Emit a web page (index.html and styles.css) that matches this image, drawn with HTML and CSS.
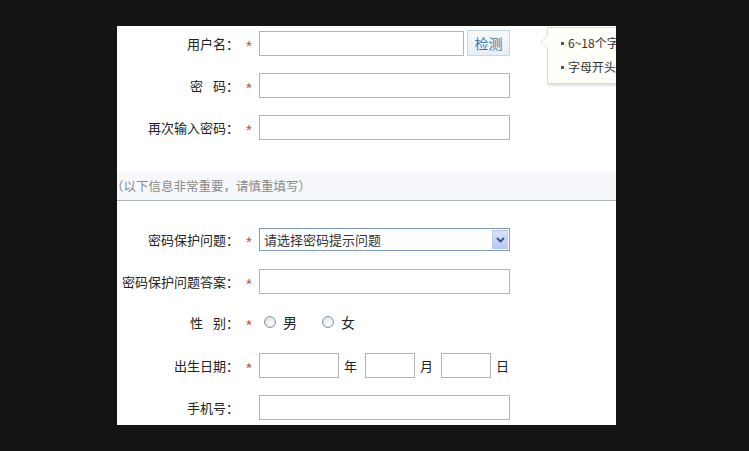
FILE: index.html
```html
<!DOCTYPE html>
<html lang="zh-CN">
<head>
<meta charset="utf-8">
<title>注册</title>
<link rel="stylesheet" href="styles.css">
</head>
<body>
<div class="page">
  <div class="panel">
    <div class="group first">
      <div class="row">
        <label class="lbl">用户名：</label><span class="req">*</span>
        <div class="field">
          <input class="inp user" type="text">
          <button class="check" type="button">检测</button>
        </div>
      </div>
      <div class="row">
        <label class="lbl">密<span class="sp"></span>码：</label><span class="req">*</span>
        <div class="field"><input class="inp" type="password"></div>
      </div>
      <div class="row">
        <label class="lbl">再次输入密码：</label><span class="req">*</span>
        <div class="field"><input class="inp" type="password"></div>
      </div>
    </div>

    <div class="notice"><span>（以下信息非常重要，请慎重填写）</span></div>

    <div class="group second">
      <div class="row top">
        <label class="lbl">密码保护问题：</label><span class="req">*</span>
        <div class="field">
          <div class="select">
            <span class="sel-text">请选择密码提示问题</span>
            <span class="sel-btn">
              <svg width="9" height="6" viewBox="0 0 9 6"><path d="M1 1 L4.5 4.5 L8 1" fill="none" stroke="#3b4f7a" stroke-width="1.8"/></svg>
            </span>
          </div>
        </div>
      </div>
      <div class="row">
        <label class="lbl">密码保护问题答案：</label><span class="req">*</span>
        <div class="field"><input class="inp" type="text"></div>
      </div>
      <div class="row gender-row">
        <label class="lbl">性<span class="sp"></span>别：</label><span class="req">*</span>
        <div class="field gender">
          <span class="radio"></span><span class="opt">男</span>
          <span class="radio second-radio"></span><span class="opt">女</span>
        </div>
      </div>
      <div class="row">
        <label class="lbl">出生日期：</label><span class="req">*</span>
        <div class="field date">
          <input class="inp year" type="text"><span class="unit">年</span>
          <input class="inp md" type="text"><span class="unit">月</span>
          <input class="inp md" type="text"><span class="unit">日</span>
        </div>
      </div>
      <div class="row">
        <label class="lbl">手机号：</label><span class="req"></span>
        <div class="field"><input class="inp" type="text"></div>
      </div>
    </div>

    <div class="tip">
      <span class="tip-arrow"></span>
      <ul>
        <li>6~18个字符，可使用字母、数字</li>
        <li>字母开头</li>
      </ul>
    </div>
  </div>
</div>
</body>
</html>
```
FILE: styles.css
```css
html, body {
  margin: 0;
  padding: 0;
  background: #141414;
}
body {
  font-family: "Noto Sans CJK SC", "Liberation Sans", sans-serif;
  color: #222;
}
.page {
  padding: 26px 0 0 117px;
}
.panel {
  position: relative;
  width: 499px;
  height: 399px;
  background: #fff;
  overflow: hidden;
}
.group {
  display: flex;
  flex-direction: column;
  gap: 17px;
}
.group.first {
  padding-top: 5px;
}
.group.second {
  margin-top: 26px;
}
.row {
  display: grid;
  grid-template-columns: 122px 20px auto;
  grid-template-rows: 25px;
  align-items: center;
  height: 25px;
}
.lbl {
  text-align: right;
  font-size: 13px;
  line-height: 25px;
  white-space: nowrap;
  color: #222;
}
.sp {
  display: inline-block;
  width: 10px;
}
.req {
  font-family: "Liberation Sans", sans-serif;
  color: #c2413a;
  font-size: 15px;
  height: 25px;
  line-height: 30px;
  text-align: center;
}
.field {
  display: flex;
  align-items: center;
  height: 25px;
}
.inp {
  box-sizing: border-box;
  width: 251px;
  height: 25px;
  border: 1px solid #b4b4b4;
  margin: 0;
  padding: 0 4px;
  background: #fff;
  outline: none;
}
.inp.user {
  width: 205px;
}
.check {
  box-sizing: border-box;
  margin-left: 3px;
  width: 43px;
  height: 26px;
  margin-top: -1px;
  border: 1px solid #c9d7e2;
  background: linear-gradient(#f7fafd, #e6eff5);
  color: #3b7aa8;
  font-family: "Noto Sans CJK SC", sans-serif;
  font-size: 14px;
  padding: 0;
  line-height: 24px;
}
.notice {
  margin-top: 32px;
  height: 28px;
  line-height: 28px;
  background: #f6f8fb;
  border-bottom: 1px solid #a9b5c2;
  font-size: 12.5px;
  color: #8a8a8a;
  white-space: nowrap;
}
.notice span {
  display: inline-block;
  margin-left: -6px;
}
.row.top {
  align-items: start;
}
.select {
  box-sizing: border-box;
  width: 251px;
  height: 23px;
  border: 1px solid #7f9db9;
  display: flex;
  align-items: center;
  justify-content: space-between;
  padding: 0 1px 0 4px;
}
.sel-text {
  font-size: 13px;
  color: #333;
  line-height: 21px;
}
.sel-btn {
  box-sizing: border-box;
  width: 16px;
  height: 19px;
  border: 1px solid #b9c9ef;
  background: linear-gradient(#d6e2fc, #b6c8f6);
  display: flex;
  align-items: center;
  justify-content: center;
}
.gender-row .lbl,
.gender-row .req {
  margin-top: -2px;
}
.gender {
  padding-left: 5px;
  margin-top: -3px;
}
.radio {
  box-sizing: border-box;
  width: 12px;
  height: 12px;
  border-radius: 50%;
  border: 1px solid #8595a8;
  background: radial-gradient(circle at 60% 60%, #ffffff 0, #f0f0f0 40%, #d4d4d4 100%);
}
.opt {
  font-size: 14px;
  margin-left: 7px;
  color: #222;
}
.second-radio {
  margin-left: 25px;
}
.date .year {
  width: 80px;
}
.date .md {
  width: 50px;
}
.unit {
  font-size: 13px;
  margin: 0 8px 0 5px;
  color: #222;
}
.tip {
  position: absolute;
  left: 430px;
  top: 1px;
  box-sizing: border-box;
  width: 130px;
  height: 57px;
  background: #fffef8;
  border: 1px solid #d9d9d9;
  box-shadow: 1px 2px 2px rgba(0, 0, 0, 0.12);
}
.tip-arrow {
  position: absolute;
  left: -8px;
  top: 7px;
  width: 0;
  height: 0;
  border-top: 7px solid transparent;
  border-bottom: 7px solid transparent;
  border-right: 8px solid #d9d9d9;
}
.tip-arrow::after {
  content: "";
  position: absolute;
  left: 1px;
  top: -6px;
  border-top: 6px solid transparent;
  border-bottom: 6px solid transparent;
  border-right: 7px solid #fffef8;
}
.tip ul {
  list-style: none;
  margin: 0;
  padding: 3px 0 0 13px;
}
.tip li {
  position: relative;
  font-size: 12px;
  line-height: 24px;
  padding-left: 7px;
  white-space: nowrap;
  color: #333;
}
.tip li::before {
  content: "";
  position: absolute;
  left: 0;
  top: 11px;
  width: 3px;
  height: 3px;
  background: #555;
}
```
